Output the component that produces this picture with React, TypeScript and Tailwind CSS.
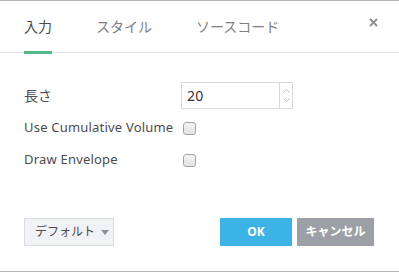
import React from "react";

const jp = "font-['Noto_Sans','Noto_Sans_CJK_JP',sans-serif]";

const Checkbox = () => (
  <span className="ml-[2px] block w-[13px] h-[13px] rounded-[3px] border border-[#a3a6ab] bg-gradient-to-b from-[#f4f4f4] to-[#e2e2e2]" />
);

export default function App() {
  return (
    <div
      className={`w-[399px] h-[272px] bg-white border-t border-b border-[#b5b5b5] flex flex-col ${jp}`}
    >
      {/* header / tabs */}
      <div className="relative h-[52px] border-b border-[#e0e3eb] flex items-start pt-4 px-6">
        <div className="flex gap-[44px] text-[14px] leading-[20px]">
          <span className="relative text-[#4a4a4a]">
            入力
            <span className="absolute left-0 top-[34px] w-[28px] h-[3px] bg-[#53b987]" />
          </span>
          <span className="text-[#808080]">スタイル</span>
          <span className="text-[#808080]">ソースコード</span>
        </div>
        <svg
          className="absolute left-[369px] top-[17px]"
          width="9"
          height="9"
          viewBox="0 0 9 9"
        >
          <path d="M1 1L8 8M8 1L1 8" stroke="#8f939b" strokeWidth="2" />
        </svg>
      </div>

      {/* body */}
      <div className="flex flex-col px-6 pt-[29px] text-[13px] tracking-[0.2px] text-[#4c4c4c]">
        <div className="flex items-center h-[27px]">
          <span className="w-[157px] text-[14px] tracking-normal">長さ</span>
          <div className="flex w-[112px] h-[27px] border border-[#d6d9df]">
            <span className="flex-1 flex items-center pl-[5px] text-[14px] text-[#333]">20</span>
            <div className="w-[13px] border-l border-[#d6d9df] flex flex-col items-center justify-around py-[3px]">
              <svg width="7" height="4" viewBox="0 0 7 4">
                <path d="M0.5 3.5L3.5 0.5L6.5 3.5" fill="none" stroke="#b4c0cc" strokeWidth="1" />
              </svg>
              <svg width="7" height="4" viewBox="0 0 7 4">
                <path d="M0.5 0.5L3.5 3.5L6.5 0.5" fill="none" stroke="#b4c0cc" strokeWidth="1" />
              </svg>
            </div>
          </div>
        </div>
        <div className="flex items-center h-[20px] mt-[9px]">
          <span className="w-[157px]">Use Cumulative Volume</span>
          <Checkbox />
        </div>
        <div className="flex items-center h-[20px] mt-[12px]">
          <span className="w-[157px]">Draw Envelope</span>
          <Checkbox />
        </div>
      </div>

      {/* footer */}
      <div className="mt-auto flex items-center px-6 pb-[25px]">
        <div className="flex items-center gap-[6px] h-[28px] w-[90px] pl-[10px] bg-[#f1f2f6] border border-[#d9dbe0] text-[12px] text-[#4a4a4a]">
          デフォルト
          <svg width="8" height="5" viewBox="0 0 8 5">
            <path d="M0 0H8L4 5Z" fill="#8a8e96" />
          </svg>
        </div>
        <div className="ml-auto flex gap-[5px] mr-px">
          <button className="w-[72px] h-[28px] bg-[#3bb3e4] text-white text-[12px] font-bold">
            OK
          </button>
          <button className="w-[77px] h-[28px] bg-[#9c9fa6] text-white text-[12px] font-bold">
            キャンセル
          </button>
        </div>
      </div>
    </div>
  );
}
